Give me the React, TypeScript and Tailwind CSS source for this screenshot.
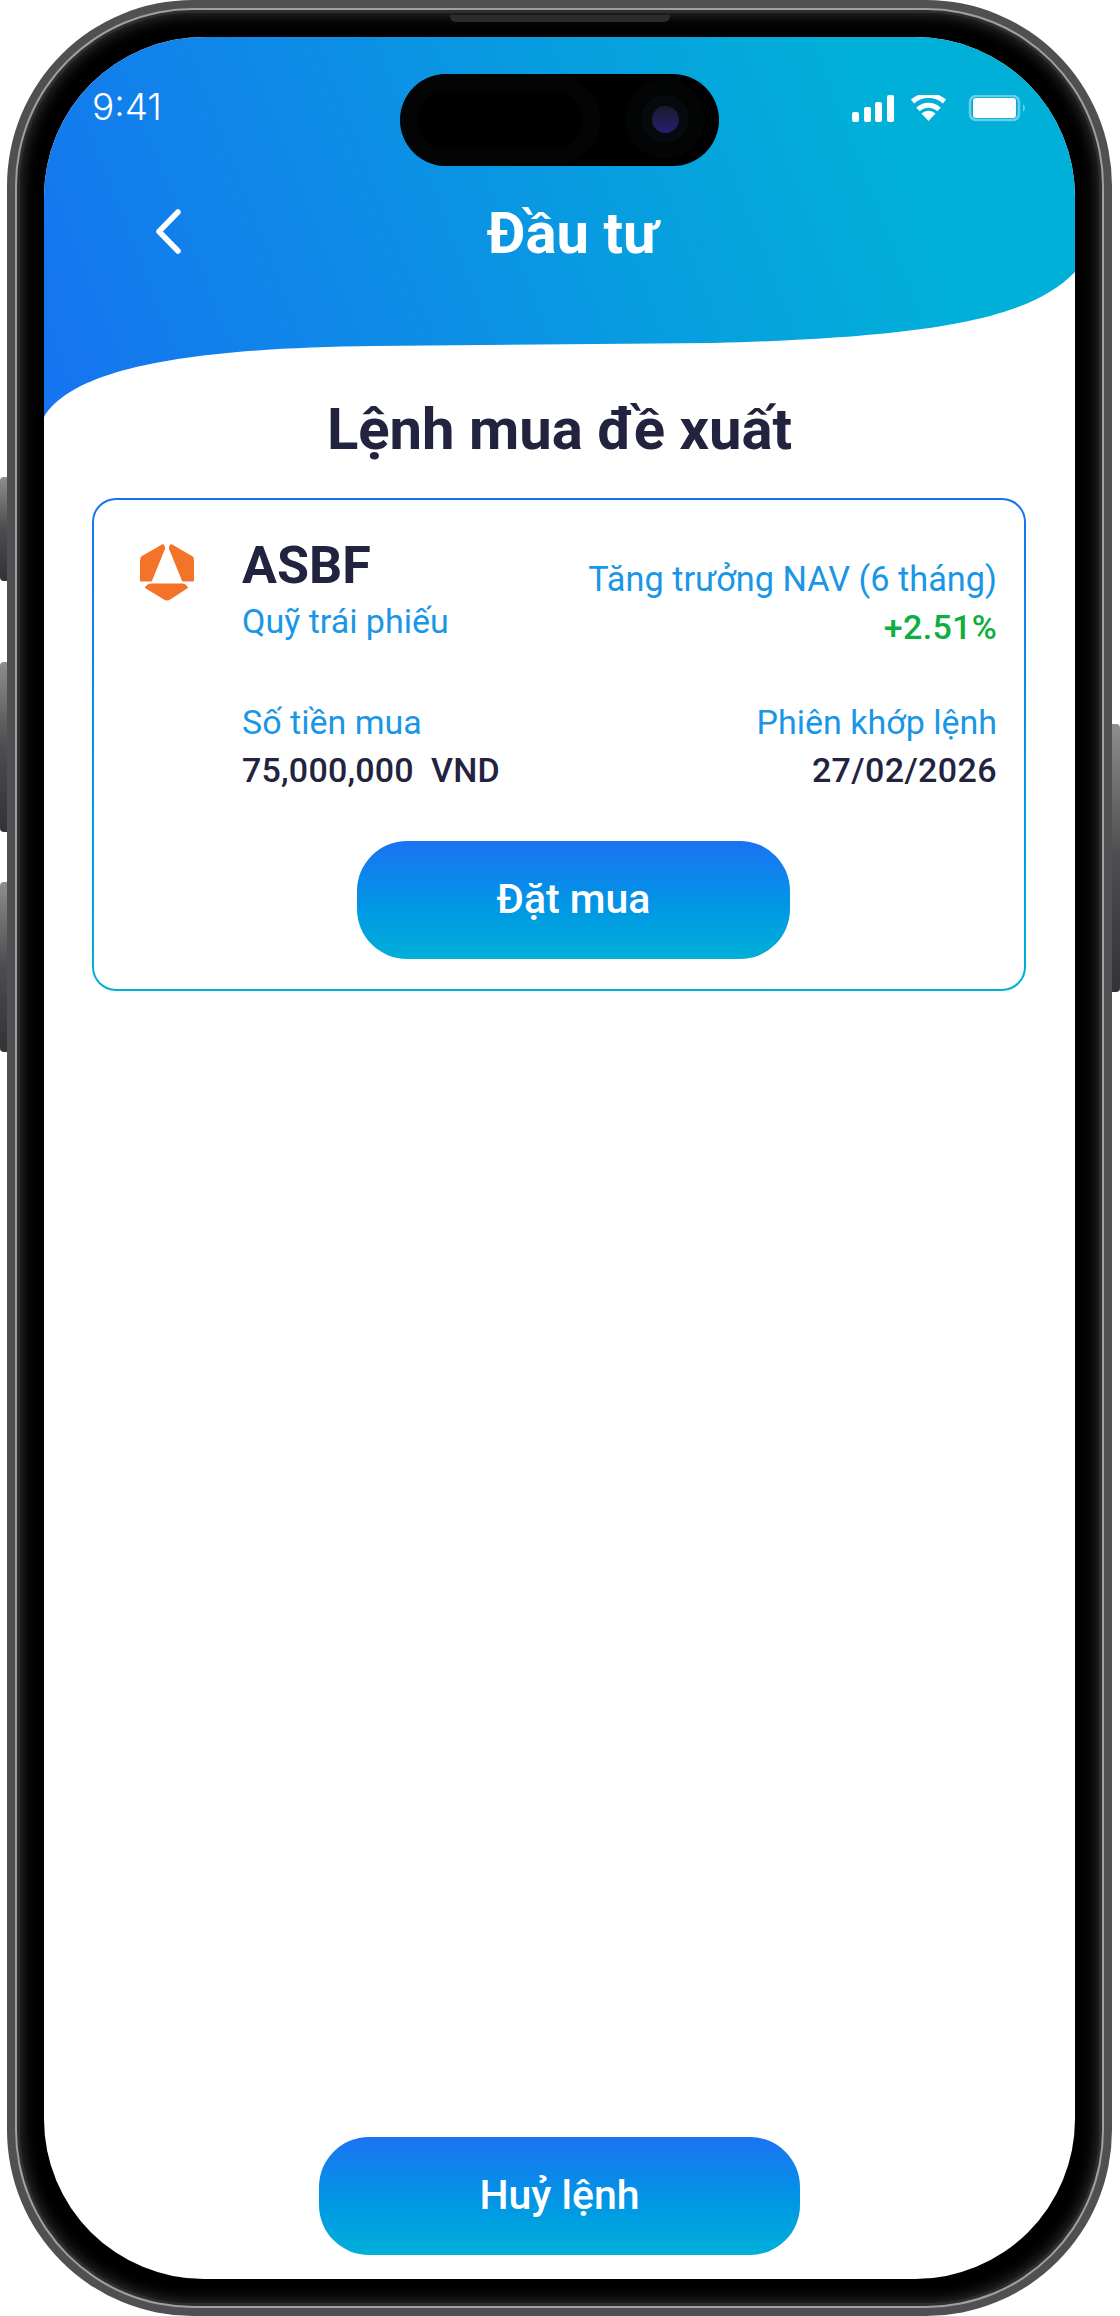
import React from 'react';

const Logo = () => (
  <svg width="54" height="58" viewBox="20 23 54 57" className="block mt-[7px]">
    <g fill="#f37429" stroke="#f37429" strokeWidth="2" strokeLinejoin="round">
      <path d="M42 25 L23 36 Q21 37 21 40 V60 H31 L44 28 Q44 24 42 25Z" />
      <path d="M52 25 L71 36 Q73 37 73 40 V60 H63 L50 28 Q50 24 52 25Z" />
      <path d="M32 64 H62 Q65 64 67 67 L50 78 Q47 80 44 78 L26 67 Q28 64 32 64Z" />
    </g>
  </svg>
);

const StatusIcons = () => (
  <svg width="176" height="32" viewBox="0 0 176 32" className="block">
    <g fill="#fff">
      <rect x="0" y="17" width="7" height="10" rx="2" />
      <rect x="12" y="12" width="7" height="15" rx="2" />
      <rect x="23" y="7" width="7" height="20" rx="2" />
      <rect x="35" y="0" width="7" height="27" rx="2" />
    </g>
    <g fill="none" stroke="#fff" strokeWidth="5">
      <path d="M60.5 6.5 A24.5 24.5 0 0 1 92.5 6.5" />
      <path d="M66 14.5 A15 15 0 0 1 87 14.5" />
    </g>
    <path d="M76.5 26 L69.5 18.5 A10 10 0 0 1 83.5 18.5Z" fill="#fff" />
    <rect x="118" y="1" width="49" height="24" rx="6" fill="none" stroke="#fff" strokeOpacity="0.4" strokeWidth="2.5" />
    <rect x="121" y="3" width="43" height="20" rx="3" fill="#fff" />
    <path d="M171 9 Q175 13 171 17Z" fill="#fff" fillOpacity="0.4" />
  </svg>
);

const Wave = () => (
  <svg width="1031" height="381" viewBox="0 0 1031 381" className="absolute inset-0">
    <defs>
      <linearGradient id="wave" gradientUnits="userSpaceOnUse" x1="0" y1="380" x2="820" y2="60">
        <stop offset="0" stopColor="#1673f1" />
        <stop offset="1" stopColor="#01b0d8" />
      </linearGradient>
    </defs>
    <path d="M0 0H1031V235C985 282 890 300 670 306L330 309C150 311 30 330 0 380Z" fill="url(#wave)" />
  </svg>
);

const Island = () => (
  <div className="relative w-[319px] h-[92px] rounded-full bg-black flex items-center pl-[18px]">
    <div className="w-[165px] h-[58px] rounded-full bg-black shadow-[0_0_0_17px_#030404]" />
    <div className="absolute right-[14px] top-[5px] w-[80px] h-[80px] rounded-full bg-[#030404] flex items-center justify-center">
      <div className="w-[48px] h-[48px] rounded-full bg-[#070a0d] flex items-center justify-center">
        <div className="w-[27px] h-[27px] rounded-full bg-gradient-to-b from-[#1c1a2e] to-[#2a1a70]" />
      </div>
    </div>
  </div>
);

const CtaButton = ({ label, className }: { label: string; className: string }) => (
  <button className={`h-[118px] rounded-[50px] bg-gradient-to-b from-[#1a72f2] to-[#01b0d8] text-white text-[41px] font-medium flex items-center justify-center ${className}`}>
    {label}
  </button>
);

const App = (): React.ReactElement => {
  return (
    <div className="w-[1120px] h-[2316px] bg-white flex font-['Roboto',sans-serif]">
      <div className="w-[7px] pt-[477px] flex flex-col items-end">
        <div className="w-[7px] h-[104px] rounded-l-[4px] bg-gradient-to-b from-[#8e8e8e] via-[#4d4d4f] to-[#333335]" />
        <div className="w-[7px] h-[170px] mt-[81px] rounded-l-[4px] bg-gradient-to-b from-[#8e8e8e] via-[#4d4d4f] to-[#333335]" />
        <div className="w-[7px] h-[170px] mt-[50px] rounded-l-[4px] bg-gradient-to-b from-[#8e8e8e] via-[#4d4d4f] to-[#333335]" />
      </div>

      <div className="w-[1105px] h-[2316px] rounded-[186px] bg-[#505052] p-[8px]">
        <div className="h-full rounded-[178px] bg-[#a0a0a2] p-[2px]">
          <div className="h-full rounded-[176px] bg-[#2e2e30] p-[3px]">
            <div className="relative h-full rounded-[173px] bg-black shadow-[inset_0_0_16px_#3c3c3e] p-[24px]">
              <div className="absolute left-1/2 -translate-x-1/2 top-[2px] w-[220px] h-[7px] rounded-b-[6px] bg-[#2c2c2e]" />

              <div className="h-full rounded-[160px] bg-white overflow-hidden flex flex-col">
                <div className="relative h-[381px] shrink-0">
                  <Wave />
                  <div className="relative grid grid-cols-[1fr_319px_1fr] pt-[37px]">
                    <div className="pl-[48px] pt-[13px] text-white text-[37px] leading-[40px] font-['Inter',sans-serif] font-light">9:41</div>
                    <Island />
                    <div className="pl-[133px] pt-[21px]">
                      <StatusIcons />
                    </div>
                  </div>
                </div>

                <div className="flex flex-col h-0">
                  <div className="relative -mt-[208px] flex items-start pl-[112px] h-[80px]">
                    <svg width="25" height="45" viewBox="0 0 25 45" className="mt-[-1px] block">
                      <path d="M22 3 L3 22.5 L22 42" fill="none" stroke="#fff" strokeWidth="5.5" strokeLinecap="round" strokeLinejoin="round" />
                    </svg>
                    <div className="ml-[306px] mt-[-17px] text-white text-[58px] leading-[80px] font-bold">Đầu tư</div>
                  </div>
                </div>

                <h1 className="relative text-center -mt-[24px] text-[#22243f] text-[58px] leading-[70px] font-bold">Lệnh mua đề xuất</h1>

                <div className="mt-[34px] ml-[48px] w-[934px] rounded-[24px] bg-gradient-to-b from-[#1a72f2] to-[#01b0d8] p-[2px]">
                  <div className="h-[489px] rounded-[22px] bg-white pt-[36px] pl-[46px] pr-[27px] flex flex-col">
                    <div className="flex">
                      <Logo />
                      <div className="ml-[48px] flex-1 flex justify-between">
                        <div>
                          <div className="text-[#22243f] text-[52px] leading-[60px] font-bold">ASBF</div>
                          <div className="text-[#1a96e6] text-[34px] leading-[40px] mt-[5px]">Quỹ trái phiếu</div>
                        </div>
                        <div className="text-right pt-[23px]">
                          <div className="text-[#1a96e6] text-[34.3px] leading-[40px]">Tăng trưởng NAV (6 tháng)</div>
                          <div className="text-[#0fae3e] text-[34px] leading-[40px] mt-[8px] font-medium tracking-[0.3px]">+2.51%</div>
                        </div>
                      </div>
                    </div>
                    <div className="ml-[102px] mt-[55px] flex justify-between">
                      <div>
                        <div className="text-[#1a96e6] text-[34px] leading-[40px]">Số tiền mua</div>
                        <div className="text-[#22243f] text-[34px] leading-[40px] mt-[8px] font-medium tracking-[0.2px]">75,000,000&nbsp;&nbsp;VND</div>
                      </div>
                      <div className="text-right">
                        <div className="text-[#1a96e6] text-[34px] leading-[40px]">Phiên khớp lệnh</div>
                        <div className="text-[#22243f] text-[34px] leading-[40px] mt-[8px] font-medium tracking-[0.4px]">27/02/2026</div>
                      </div>
                    </div>
                    <CtaButton label="Đặt mua" className="w-[433px] ml-[217px] mt-[51px]" />
                  </div>
                </div>

                <div className="flex-1" />
                <CtaButton label="Huỷ lệnh" className="w-[481px] self-center mb-[24px]" />
              </div>
            </div>
          </div>
        </div>
      </div>

      <div className="w-[8px] pt-[724px]">
        <div className="w-[8px] h-[268px] rounded-r-[4px] bg-gradient-to-b from-[#8e8e8e] via-[#4d4d4f] to-[#333335]" />
      </div>
    </div>
  );
};

export default App;
